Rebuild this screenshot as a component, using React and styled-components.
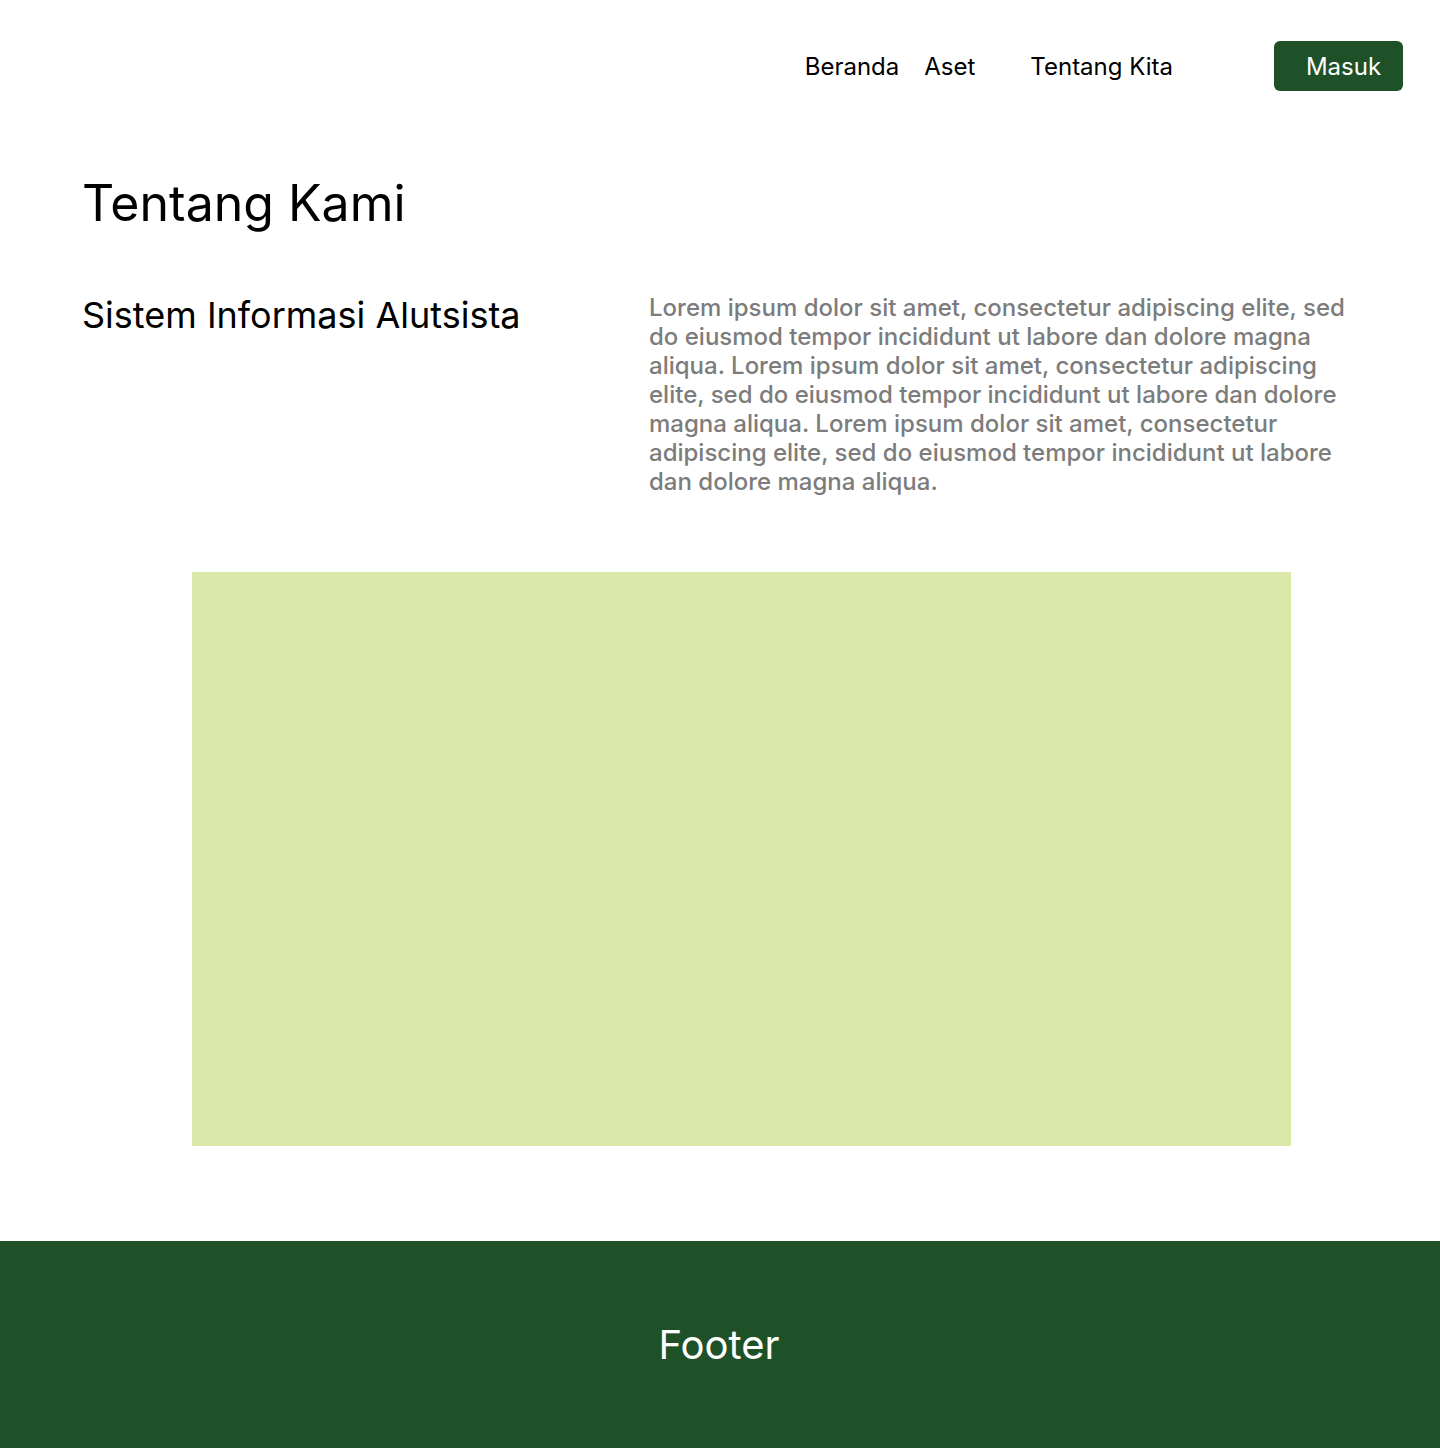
import React from 'react'
import styled, { createGlobalStyle } from 'styled-components'

const GlobalStyle = createGlobalStyle`
  body {
    margin: 0;
    background: #fff;
    font-family: Inter, "Noto Sans", sans-serif;
  }
`

const Page = styled.div`
  width: 1440px;
  min-height: 1448px;
  display: flex;
  flex-direction: column;
`

const Header = styled.header`
  display: flex;
  justify-content: flex-end;
  align-items: center;
  height: 132px;
  padding: 0 37px 0 0;
  box-sizing: border-box;
`

const Nav = styled.nav`
  display: flex;
  align-items: center;
`

const NavLink = styled.a`
  font-size: 24px;
  color: #000;
  text-decoration: none;
  margin-right: ${p => p.gap}px;
`

const LoginButton = styled.button`
  width: 129px;
  height: 50px;
  border: none;
  border-radius: 6px;
  background: #1f5129;
  color: #fff;
  font-family: inherit;
  font-size: 24px;
  padding: 0 0 0 10px;
  cursor: pointer;
`

const Main = styled.main`
  padding: 41px 82px 0;
`

const Title = styled.h1`
  margin: 0;
  font-size: 50px;
  font-weight: 400;
  line-height: 60px;
  color: #000;
`

const AboutRow = styled.section`
  display: grid;
  grid-template-columns: 567px 1fr;
  margin-top: 60px;
`

const Subtitle = styled.h2`
  margin: 0;
  font-size: 36px;
  font-weight: 400;
  line-height: 44px;
  color: #000;
`

const Paragraph = styled.p`
  margin: 0;
  font-size: 24px;
  font-weight: 500;
  line-height: 29px;
  color: #7c7c7c;
  max-width: 700px;
`

const Banner = styled.div`
  width: 1099px;
  height: 574px;
  margin: 76px 0 0 192px;
  background: #dae9a9;
`

const Footer = styled.footer`
  margin-top: 95px;
  height: 207px;
  background: #1f5129;
  display: flex;
  align-items: center;
  justify-content: center;
`

const FooterText = styled.span`
  color: #fff;
  font-size: 40px;
  margin-left: -2px;
`

const links = [
  { label: 'Beranda', gap: 25 },
  { label: 'Aset', gap: 55 },
  { label: 'Tentang Kita', gap: 101 },
]

export default function App() {
  return (
    <>
      <GlobalStyle />
      <Page>
        <Header>
          <Nav>
            {links.map(l => (
              <NavLink href="#" key={l.label} gap={l.gap}>{l.label}</NavLink>
            ))}
          </Nav>
          <LoginButton>Masuk</LoginButton>
        </Header>
        <Main>
          <Title>Tentang Kami</Title>
          <AboutRow>
            <Subtitle>Sistem Informasi Alutsista</Subtitle>
            <Paragraph>
              Lorem ipsum dolor sit amet, consectetur adipiscing elite, sed do eiusmod tempor incididunt ut labore dan dolore magna aliqua. Lorem ipsum dolor sit amet, consectetur adipiscing elite, sed do eiusmod tempor incididunt ut labore dan dolore magna aliqua. Lorem ipsum dolor sit amet, consectetur adipiscing elite, sed do eiusmod tempor incididunt ut labore dan dolore magna aliqua.
            </Paragraph>
          </AboutRow>
        </Main>
        <Banner />
        <Footer>
          <FooterText>Footer</FooterText>
        </Footer>
      </Page>
    </>
  )
}
